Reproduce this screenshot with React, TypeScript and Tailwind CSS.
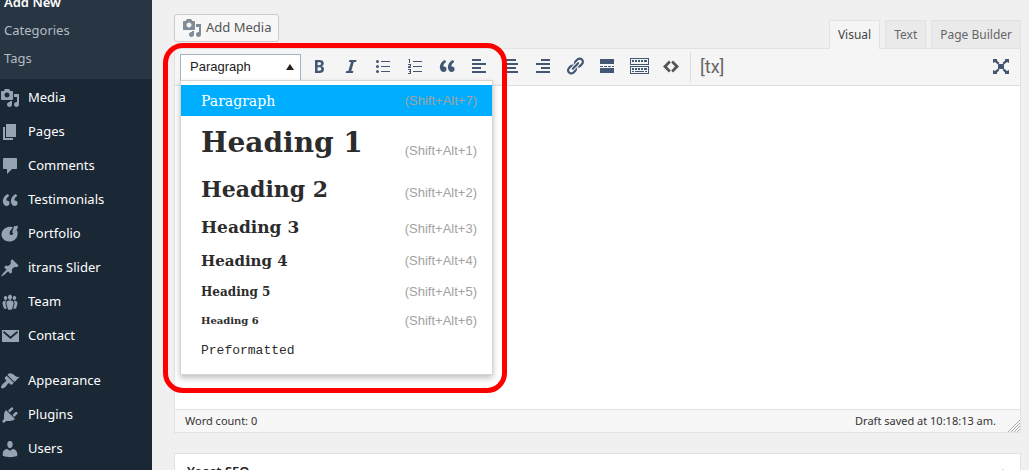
import type { ReactNode } from 'react'
import clsx from 'clsx'

const ICONS = {
  media:
    'M13 11V4c0-.55-.45-1-1-1h-1.67L9 1H5L3.67 3H2c-.55 0-1 .45-1 1v7c0 .55.45 1 1 1h10c.55 0 1-.45 1-1zM7 4.5c1.38 0 2.5 1.12 2.5 2.5S8.38 9.5 7 9.5 4.5 8.38 4.5 7 5.62 4.5 7 4.5zM14 6h5v10.5c0 1.38-1.12 2.5-2.5 2.5S14 17.88 14 16.5s1.12-2.5 2.5-2.5c.17 0 .34.02.5.05V9h-3V6zm-4 8.05V13h2v3.5c0 1.38-1.12 2.5-2.5 2.5S7 17.88 7 16.5 8.12 14 9.5 14c.17 0 .34.02.5.05z',
  page: 'M6 15V2h10v13H6zm-1 1h8v2H3V5h2v11z',
  comments: 'M4 2h12c.6 0 1 .4 1 1v9c0 .6-.4 1-1 1h-4l-5 5v-5H4c-.6 0-1-.4-1-1V3c0-.6.4-1 1-1z',
  quote:
    'M9.49 13.22c0-.74-.2-1.38-.61-1.9-.62-.78-1.83-.88-2.53-.72-.29-1.65 1.11-3.75 2.92-4.65L7.88 4c-2.73 1.3-5.42 4.28-4.96 8.05C3.21 14.43 4.59 16 6.54 16c.85 0 1.56-.25 2.12-.75s.83-1.18.83-2.03zm8.05 0c0-.74-.2-1.38-.61-1.9-.63-.78-1.83-.88-2.53-.72-.29-1.65 1.11-3.75 2.92-4.65L15.93 4c-2.73 1.3-5.41 4.28-4.95 8.05.29 2.38 1.66 3.95 3.61 3.95.85 0 1.56-.25 2.12-.75s.83-1.18.83-2.03z',
  portfolio:
    'M8 3c1.8-.6 3.8-.5 5 .5L10.500 6.500c-.9 1.200-1.200 2.800-.5 4 .7 1 2 .7 2.700-.3L16.500 5.500c1 1.500 1.400 3.500 1 5.500-.7 4-4 6.500-8 6.500-4.500 0-8-2.800-8-7C1.500 6.800 4.300 3.900 8 3zM14 2.200l4-.4-.6 3-4 4.700-1.200-1z',
  pin: 'M10.44 3.02l1.82-1.82 6.36 6.35-1.83 1.82c-1.05-.68-2.48-.57-3.41.36l-.75.75c-.92.93-1.04 2.35-.35 3.41l-1.83 1.82-2.41-2.41-2.8 2.79c-.42.42-3.38 2.71-3.8 2.29s1.86-3.39 2.28-3.81l2.79-2.79L4.1 9.36l1.83-1.82c1.05.69 2.48.57 3.4-.36l.75-.75c.93-.92 1.05-2.35.36-3.41z',
  groups:
    'M8.03 4.46c-.29 1.28.55 3.46 1.97 3.46 1.41 0 2.25-2.18 1.96-3.46-.22-.98-1.08-1.63-1.96-1.63-.89 0-1.74.65-1.97 1.63zm-4.13.9c-.25 1.08.47 2.93 1.67 2.93s1.92-1.85 1.67-2.93c-.19-.83-.92-1.39-1.67-1.39s-1.48.56-1.67 1.39zm8.86 0c-.25 1.08.47 2.93 1.66 2.93 1.2 0 1.92-1.85 1.67-2.93-.19-.83-.92-1.39-1.67-1.39-.74 0-1.47.56-1.66 1.39zm-.59 11.43l1.25-4.3C14.2 10 12.71 8.47 10 8.47c-2.72 0-4.21 1.53-3.44 4.02l1.26 4.3C8.05 17.51 9 18 10 18c.98 0 1.94-.49 2.17-1.21zm-6.1-7.63c-.49.67-.96 1.83-.42 3.59l1.12 3.79c-.34.2-.77.31-1.2.31-.85 0-1.65-.41-1.85-1.03l-1.07-3.65c-.65-2.11.61-3.4 2.92-3.4.27 0 .54.02.79.06-.1.1-.2.22-.29.33zm8.35-.39c2.31 0 3.58 1.29 2.92 3.4l-1.07 3.65c-.2.62-1 1.03-1.85 1.03-.43 0-.86-.11-1.2-.31l1.11-3.77c.55-1.78.08-2.94-.42-3.61-.08-.11-.18-.23-.28-.33.25-.04.51-.06.79-.06z',
  email: 'M2 4h17v12H2V4zm2 1l-1 1.500L10.500 13 18 6.500 17 5l-6.500 5.500z',
  appearance:
    'M14.48 11.06L7.41 3.99l1.5-1.5c.5-.56 2.3-.47 3.51.32 1.21.8 1.43 1.28 2.91 2.1 1.18.64 2.45 1.26 4.45.85zm-.71.71L6.7 4.7 4.93 6.47c-.39.39-.39 1.02 0 1.41l1.06 1.06c.39.39.39 1.03 0 1.42-.6.6-1.43 1.11-2.21 1.69-.35.26-.7.53-1.01.84C1.43 14.23.4 16.08 1.4 17.07c.99 1 2.84-.03 4.18-1.36.31-.31.58-.66.85-1.02.57-.78 1.08-1.61 1.69-2.21.39-.39 1.02-.39 1.41 0l1.06 1.06c.39.39 1.02.39 1.41 0z',
  plugins:
    'M13.11 4.36L9.87 7.6 8 5.73l3.24-3.24c.35-.34 1.05-.2 1.56.32.52.51.66 1.21.31 1.55zm-8 1.77l.91-1.12 9.01 9.01-1.19.84c-.71.71-2.63 1.16-3.82 1.16H6.14L4.9 17.26c-.59.59-1.54.59-2.12 0-.59-.58-.59-1.53 0-2.12l1.24-1.24v-3.88c0-1.13.4-3.19 1.09-3.89zm7.26 3.97l3.24-3.24c.34-.35 1.04-.21 1.55.31.52.51.66 1.21.31 1.55l-3.24 3.25z',
  users:
    'M10 9.25c-2.27 0-2.73-3.44-2.73-3.44C7 4.02 7.82 2 9.97 2c2.16 0 2.98 2.02 2.71 3.81 0 0-.41 3.44-2.68 3.44zm0 2.57L12.72 10c2.39 0 4.52 2.33 4.52 4.53v2.49s-3.65 1.13-7.24 1.13c-3.65 0-7.24-1.13-7.24-1.13v-2.49c0-2.25 1.94-4.48 4.47-4.48z',
  bold: 'M6 4v13h4.54c1.37 0 2.46-.33 3.26-1 .8-.66 1.2-1.58 1.2-2.77 0-.84-.17-1.51-.51-2.01s-.9-.85-1.67-1.03v-.09c.57-.1 1.02-.4 1.36-.9s.51-1.13.51-1.91c0-1.14-.39-1.98-1.17-2.5C12.75 4.26 11.5 4 9.78 4H6zm2.57 5.15V6.26h1.36c.73 0 1.27.11 1.61.32.34.22.51.58.51 1.07 0 .54-.16.92-.47 1.15s-.82.35-1.51.35h-1.5zm0 2.19h1.6c1.44 0 2.16.53 2.16 1.61 0 .6-.17 1.05-.51 1.34s-.86.43-1.57.43H8.57v-3.38z',
  italic: 'M15 6h-2.130l-2.600 9h2.120l-.62 2H4.600l.62-2h2.140l2.600-9H7.830l.62-2h7.150z',
  bullets:
    'M6 5.500a1.500 1.500 0 1 1-3 0 1.500 1.500 0 0 1 3 0zM8 5h9v1H8zM6 10.500a1.500 1.500 0 1 1-3 0 1.500 1.500 0 0 1 3 0zM8 10h9v1H8zM6 15.500a1.500 1.500 0 1 1-3 0 1.500 1.500 0 0 1 3 0zM8 15h9v1H8z',
  numbers:
    'M4 3h1v4H4V4H3zM8 5h9v1H8zM3 8h3v2.500L4 11h2v1H3v-1.500l2-1V9H3zM8 10h9v1H8zM3 13h3v5H3v-1h2v-1H4v-1h1v-1H3zM8 15h9v1H8z',
  left: 'M3 3h9v2H3zM3 7h14v2H3zM3 11h9v2H3zM3 15h14v2H3z',
  center: 'M5 3h10v2H5zM3 7h14v2H3zM5 11h10v2H5zM3 15h14v2H3z',
  right: 'M8 3h9v2H8zM3 7h14v2H3zM8 11h9v2H8zM3 15h14v2H3z',
  link: 'M17.74 2.76c1.68 1.69 1.68 4.41 0 6.1l-1.53 1.52c-1.12 1.12-2.7 1.47-4.14 1.09l2.62-2.61.76-.77.76-.76c.84-.84.84-2.2 0-3.04-.84-.85-2.2-.85-3.04 0l-.77.76-3.38 3.38c-.37-1.44-.02-3.02 1.1-4.14l1.52-1.53c1.69-1.68 4.42-1.68 6.1 0zM8.59 13.43l5.34-5.34c.42-.42.42-1.1 0-1.52-.44-.43-1.13-.39-1.53 0l-5.33 5.34c-.42.42-.42 1.1 0 1.52.44.43 1.13.39 1.52 0zm-.76 2.29l4.14-4.15c.38 1.44.03 3.02-1.09 4.14l-1.52 1.53c-1.69 1.68-4.41 1.68-6.1 0-1.68-1.68-1.68-4.42 0-6.1l1.53-1.52c1.12-1.12 2.7-1.47 4.14-1.1l-4.14 4.15c-.85.84-.85 2.2 0 3.05.84.84 2.2.84 3.04 0z',
  more: 'M3 3h14v5H3zM3 10h3v1H3zM7 10h3v1H7zM11 10h3v1h-3zM15 10h2v1h-2zM3 12h14v5H3z',
  keyboard:
    'M1 2h19v7H1zM2 3v5h17V3zM1 10h19v8H1zM2 11v6h17v-6zM3 4h2v2H3zM6 4h2v2H6zM9 4h2v2H9zM12 4h2v2h-2zM15 4h3v2h-3zM3 12h2v2H3zM6 12h2v2H6zM9 12h2v2H9zM12 12h2v2h-2zM15 12h3v2h-3zM3 15h2v1H3zM6 15h9v1H6zM16 15h2v1h-2z',
  code: 'M8 4.500l1.800 2-3.800 4 3.800 4-1.800 2-6-6zM12 4.500l-1.800 2 3.800 4-3.800 4 1.800 2 6-6z',
  expand:
    'M7 8h6v5H7zM2 3h4v1.500L8.500 7 7 8.500 4 6 2 7zM18 3h-4v1.500L11.500 7 13 8.500 16 6l2 1zM2 18h4v-1.500L8.500 14 7 12.500 4 15l-2-1zM18 18h-4v-1.500L11.500 14l1.500-1.500 3 2.500 2-1z',
}

type IconName = keyof typeof ICONS

function Icon({ name }: { name: IconName }) {
  return (
    <svg viewBox="0 0 20 20" className="size-5 shrink-0" fill="currentColor" fillRule="evenodd" aria-hidden="true">
      <path d={ICONS[name]} />
    </svg>
  )
}

const MENU: { label: string; icon: IconName }[] = [
  { label: 'Media', icon: 'media' },
  { label: 'Pages', icon: 'page' },
  { label: 'Comments', icon: 'comments' },
  { label: 'Testimonials', icon: 'quote' },
  { label: 'Portfolio', icon: 'portfolio' },
  { label: 'itrans Slider', icon: 'pin' },
  { label: 'Team', icon: 'groups' },
  { label: 'Contact', icon: 'email' },
  { label: 'Appearance', icon: 'appearance' },
  { label: 'Plugins', icon: 'plugins' },
  { label: 'Users', icon: 'users' },
]

const TOOLS: { label: string; icon: IconName }[] = [
  { label: 'Bold', icon: 'bold' },
  { label: 'Italic', icon: 'italic' },
  { label: 'Bulleted list', icon: 'bullets' },
  { label: 'Numbered list', icon: 'numbers' },
  { label: 'Blockquote', icon: 'quote' },
  { label: 'Align left', icon: 'left' },
  { label: 'Align center', icon: 'center' },
  { label: 'Align right', icon: 'right' },
  { label: 'Link', icon: 'link' },
  { label: 'Read more', icon: 'more' },
  { label: 'Toolbar toggle', icon: 'keyboard' },
  { label: 'Source code', icon: 'code' },
]

const SERIF = "font-['DejaVu_Serif',serif]"

const FORMATS = [
  { label: 'Paragraph', keys: '(Shift+Alt+7)', row: 'h-[31px] bg-[#00aeff] text-white', text: 'text-[14px]' },
  { label: 'Heading 1', keys: '(Shift+Alt+1)', row: 'h-[53px]', text: 'text-[28px] font-bold', keysPad: 'pt-4' },
  { label: 'Heading 2', keys: '(Shift+Alt+2)', row: 'h-10', text: 'text-[22px] font-bold', keysPad: 'pt-2' },
  { label: 'Heading 3', keys: '(Shift+Alt+3)', row: 'h-9', text: 'text-[17px] font-bold', keysPad: 'pt-1' },
  { label: 'Heading 4', keys: '(Shift+Alt+4)', row: 'h-8', text: 'text-[15px] font-bold' },
  { label: 'Heading 5', keys: '(Shift+Alt+5)', row: 'h-[29px]', text: 'text-[12px] font-bold' },
  { label: 'Heading 6', keys: '(Shift+Alt+6)', row: 'h-[29px]', text: 'text-[10px] font-bold' },
  { label: 'Preformatted', keys: '', row: 'h-[31px]', text: "text-[13px] font-['Liberation_Mono',monospace]" },
]

function Sidebar() {
  return (
    <nav className="w-[152px] shrink-0 bg-[#1a2735] text-white" aria-label="Admin menu">
      <ul className="-mt-[11px] bg-[#283644] pb-1.5 text-[13px] text-[#b4bcc4]">
        {['Add New', 'Categories', 'Tags'].map((label, i) => (
          <li key={label}>
            <a href="#" className={clsx('flex h-7 items-center pl-1', i === 0 && 'font-semibold text-white')}>
              {label}
            </a>
          </li>
        ))}
      </ul>
      <ul className="pt-0.5 text-[13px]">
        {MENU.map(({ label, icon }) => (
          <li key={label} className={clsx(label === 'Appearance' && 'mt-[11px]')}>
            <a href="#" className="flex h-[34px] items-center gap-2">
              <span className="text-[#96a3b0]">
                <Icon name={icon} />
              </span>
              {label}
            </a>
          </li>
        ))}
      </ul>
    </nav>
  )
}

function Tab({ active, children }: { active?: boolean; children: ReactNode }) {
  return (
    <button
      type="button"
      role="tab"
      aria-selected={!!active}
      className={clsx(
        'border border-b-0 border-[#e2e2e2] px-2 text-[12px]',
        active ? '-mb-px h-[29px] bg-[#f5f5f5] text-[#444]' : 'h-7 bg-[#eaeaea] text-[#666]',
      )}
    >
      {children}
    </button>
  )
}

function FormatMenu() {
  return (
    <div className="relative mr-0.5">
      <button
        type="button"
        aria-haspopup="menu"
        aria-expanded="true"
        className="flex h-[26px] w-[121px] items-center justify-between border border-b-0 border-[#a5b4c4] bg-white pr-1.5 pb-0.5 pl-[9px] font-['Liberation_Sans',sans-serif] text-[13px] text-[#222]"
      >
        Paragraph
        <svg viewBox="0 0 8 6" className="h-1.5 w-2" fill="#222" aria-hidden="true">
          <path d="M4 0l4 6H0z" />
        </svg>
      </button>

      <div
        role="menu"
        className="absolute top-full left-0 z-10 w-[313px] border border-[#d5d5d5] bg-white pt-1 pb-2 text-[#2c2c2c] shadow-[0_3px_6px_rgba(0,0,0,0.25)]"
      >
        {FORMATS.map(({ label, keys, row, text, keysPad }) => (
          <button
            key={label}
            type="button"
            role="menuitem"
            className={clsx('flex w-full items-center justify-between pr-[15px] pl-5 whitespace-nowrap', row)}
          >
            <span className={clsx('leading-none', keys && SERIF, text)}>{label}</span>
            <span className={clsx("font-['Liberation_Sans',sans-serif] text-[13px] text-[#a2a2a2]", keysPad)}>
              {keys}
            </span>
          </button>
        ))}
      </div>

      {/* highlight ring around the open menu */}
      <div className="pointer-events-none absolute -top-[11px] -left-[17px] z-20 h-[350px] w-[344px] rounded-[20px] border-5 border-[#ff0000]" />
    </div>
  )
}

function Toolbar() {
  return (
    <div
      role="toolbar"
      className="flex h-[37px] items-center border-b border-[#dedede] bg-[#f5f5f5] pr-[9px] pl-[5px] text-[#435672]"
    >
      <FormatMenu />
      {TOOLS.map(({ label, icon }) => (
        <button
          key={label}
          type="button"
          aria-label={label}
          className={clsx('flex h-7 w-8 items-center justify-center pb-0.5', label === 'Source code' && 'text-[#555]')}
        >
          <Icon name={icon} />
        </button>
      ))}
      <button
        type="button"
        className="ml-[3px] h-[30px] border-l border-[#ddd] pb-0.5 pl-[9px] font-['Roboto',sans-serif] text-[18px] text-[#666]"
      >
        [tx]
      </button>
      <button type="button" aria-label="Distraction-free writing" className="ml-auto pb-0.5">
        <Icon name="expand" />
      </button>
    </div>
  )
}

export default function App() {
  return (
    <div className="flex h-screen overflow-hidden bg-[#f0f0f0] font-['Noto_Sans',sans-serif] text-[#333]">
      <Sidebar />
      <main className="flex min-w-0 flex-1 flex-col pr-2 pl-[22px]">
        <div className="flex h-12 shrink-0 items-end">
          <button
            type="button"
            className="mb-1.5 flex h-7 items-center gap-1 rounded-[3px] border border-[#ccc] bg-[#f7f7f7] px-[7px] text-[13px] text-[#555]"
          >
            <span className="text-[#7f8b96]">
              <Icon name="media" />
            </span>
            Add Media
          </button>
          <div className="z-1 ml-auto flex items-end gap-[5px]" role="tablist">
            <Tab active>Visual</Tab>
            <Tab>Text</Tab>
            <Tab>Page Builder</Tab>
          </div>
        </div>

        <section className="shrink-0 border border-[#e2e2e2] bg-white">
          <Toolbar />
          <div
            className="h-[323px]"
            role="textbox"
            aria-multiline="true"
            aria-label="Post content"
            contentEditable
            suppressContentEditableWarning
          />
          <footer className="flex h-[23px] items-center justify-between border-t border-[#e2e2e2] bg-[#f7f7f7] pl-2.5 text-[11px]">
            <span>Word count: 0</span>
            <span className="flex items-center gap-2.5 self-stretch">
              Draft saved at 10:18:13 am.
              <svg viewBox="0 0 14 14" className="size-3.5 self-end" stroke="#aaa" aria-hidden="true">
                <path d="M2 14L14 2M5 14l9-9M8 14l6-6M11 14l3-3" />
              </svg>
            </span>
          </footer>
        </section>

        <section className="mt-5 shrink-0 border border-[#e2e2e2] bg-white">
          <h2 className="flex h-9 items-center px-3 text-[13px] font-semibold text-[#222]">
            Yoast SEO
            <svg viewBox="0 0 10 6" className="ml-auto h-1.5 w-2.5" fill="#aaa" aria-hidden="true">
              <path d="M5 0l5 6H0z" />
            </svg>
          </h2>
        </section>
      </main>
    </div>
  )
}
